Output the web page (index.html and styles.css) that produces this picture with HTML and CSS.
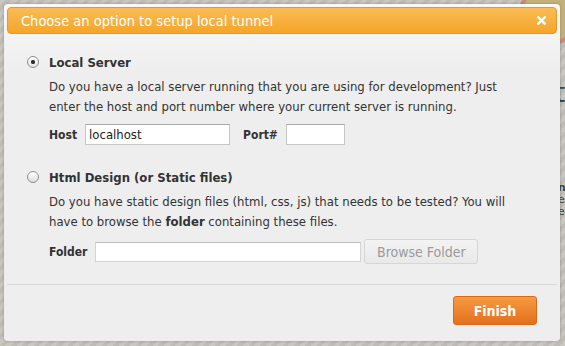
FILE: index.html
```html
<!DOCTYPE html>
<html lang="en">
<head>
  <meta charset="UTF-8" />
  <title>Local Tunnel</title>
  <link rel="stylesheet" href="styles.css">
</head>
<body>
  <!-- page behind the modal, only its edges show -->
  <div class="backdrop-page">
    <span class="bg-word bg-word-big">t</span>
    <span class="bg-word bg-word-bold">n</span>
    <span class="bg-word">e</span>
    <span class="bg-word">e</span>
  </div>

  <div class="dialog">
    <div class="dialog-header">
      <span class="dialog-title">Choose an option to setup local tunnel</span>
      <svg class="dialog-close" width="9" height="9" viewBox="0 0 9 9">
        <path d="M1.3 1.3 L7.7 7.7 M7.7 1.3 L1.3 7.7" stroke="#fff" stroke-width="2.4" stroke-linecap="round" />
      </svg>
    </div>

    <div class="dialog-body">
      <div class="option">
        <label class="option-head">
          <input type="radio" name="mode" checked />
          <span>Local Server</span>
        </label>
        <div class="option-body">
          <p class="desc desc-server">Do you have a local server running that you are using for development? Just enter the host and port number where your current server is running.</p>
          <div class="field-row">
            <label class="field-label">Host</label>
            <input class="text host" type="text" value="localhost" />
            <label class="field-label port-label">Port#</label>
            <input class="text port" type="text" />
          </div>
        </div>
      </div>

      <div class="option option-static">
        <label class="option-head">
          <input type="radio" name="mode" />
          <span>Html Design (or Static files)</span>
        </label>
        <div class="option-body">
          <p class="desc desc-static">Do you have static design files (html, css, js) that needs to be tested? You will have to browse the <strong>folder</strong> containing these files.</p>
          <div class="field-row">
            <label class="field-label">Folder</label>
            <input class="text folder" type="text" />
            <button class="btn btn-disabled" disabled>Browse Folder</button>
          </div>
        </div>
      </div>
    </div>

    <div class="dialog-footer">
      <button class="btn btn-primary">Finish</button>
    </div>
  </div>
</body>
</html>
```

FILE: styles.css
```css
body {
  margin: 0;
  padding: 4px;
  font-family: 'DejaVu Sans Condensed', 'DejaVu Sans', sans-serif;
  font-size: 13px;
  color: #333;
  background-color: #c4c2bb;
  background-image:
    radial-gradient(circle at 548px 16px, #c2b27a 0, #c2b27a 26px, #c98a78 27px, #c98a78 30px, transparent 31px),
    repeating-linear-gradient(-45deg, #c9c7c0 0, #c9c7c0 4px, #bebcb5 4px, #bebcb5 8px);
  height: 346px;
  box-sizing: border-box;
  overflow: hidden;
  position: relative;
}

.backdrop-page {
  position: absolute;
  top: 0;
  left: 545px;
  display: flex;
  flex-direction: column;
  color: #444;
  font-family: 'DejaVu Sans', sans-serif;
}

.bg-word {
  font-size: 11px;
  line-height: 12px;
  margin-left: 13px;
}

.bg-word-big {
  font-size: 26px;
  line-height: 30px;
  margin: 78px 0 74px 10px;
}

.bg-word-bold {
  font-weight: bold;
}

.dialog {
  position: relative;
  width: 556px;
  box-sizing: border-box;
  padding: 3px;
  border-radius: 4px;
  background: linear-gradient(#f8f8f8, #eeeeee 70px);
  box-shadow: 0 0 3px rgba(0, 0, 0, 0.25);
}

.dialog-header {
  height: 27px;
  box-sizing: border-box;
  border: 1px solid #e6972c;
  border-radius: 4px;
  background: linear-gradient(#f9bc57, #f5a528);
  color: #fff;
  display: flex;
  align-items: center;
  justify-content: space-between;
  padding: 0 10px 0 13px;
}

.dialog-title {
  font-size: 14.5px;
}

.dialog-close {
  display: block;
}

.dialog-body {
  padding: 18px 20px 20px;
  border-bottom: 1px solid #d8d8d8;
}

.option-static {
  margin-top: 22px;
}

.option-head {
  display: flex;
  align-items: center;
  height: 20px;
  font-size: 13px;
  font-weight: bold;
}

.option-head input {
  appearance: none;
  width: 12px;
  height: 12px;
  margin: 0 10px 0 0;
  border: 1px solid #8c8c8c;
  border-radius: 50%;
  box-sizing: border-box;
  background: linear-gradient(#ffffff, #dcdcdc);
}

.option-head input:checked {
  background: radial-gradient(circle, #333 0, #333 1.8px, transparent 2.4px), linear-gradient(#ffffff, #e4e4e4);
}

.option-body {
  padding-left: 22px;
}

.desc {
  margin: 5px 0 0;
  line-height: 20px;
}

.desc-server {
  width: 448px;
}

.desc-static {
  width: 462px;
}

.field-row {
  display: flex;
  align-items: center;
  margin-top: 7px;
}

.field-label {
  font-size: 12px;
  font-weight: bold;
  margin-right: 8px;
}

.port-label {
  margin-left: 13px;
}

.text {
  box-sizing: border-box;
  height: 21px;
  border: 1px solid #c6c6c6;
  border-top-color: #a9a9a9;
  background: #fff;
  font-family: inherit;
  font-size: 13px;
  color: #222;
  padding: 0 3px;
  margin: 0;
}

.host {
  width: 145px;
}

.port {
  width: 59px;
}

.folder {
  width: 266px;
  height: 20px;
  border-color: #d4d4d4;
  border-top-color: #bdbdbd;
}

.btn {
  font-family: inherit;
  border-radius: 3px;
  margin: 0;
}

.btn-disabled {
  margin-left: 3px;
  width: 114px;
  height: 25px;
  font-size: 14px;
  color: #9a9a9a;
  border: 1px solid #d6d6d6;
  background: linear-gradient(#f3f3f3, #e9e9e9);
}

.dialog-footer {
  display: flex;
  justify-content: flex-end;
  padding: 11px 20px 13px;
}

.btn-primary {
  width: 84px;
  height: 29px;
  font-size: 14px;
  font-weight: bold;
  color: #fff;
  border: 1px solid #d8691b;
  background: linear-gradient(#f89a40, #e4701d);
}
```
